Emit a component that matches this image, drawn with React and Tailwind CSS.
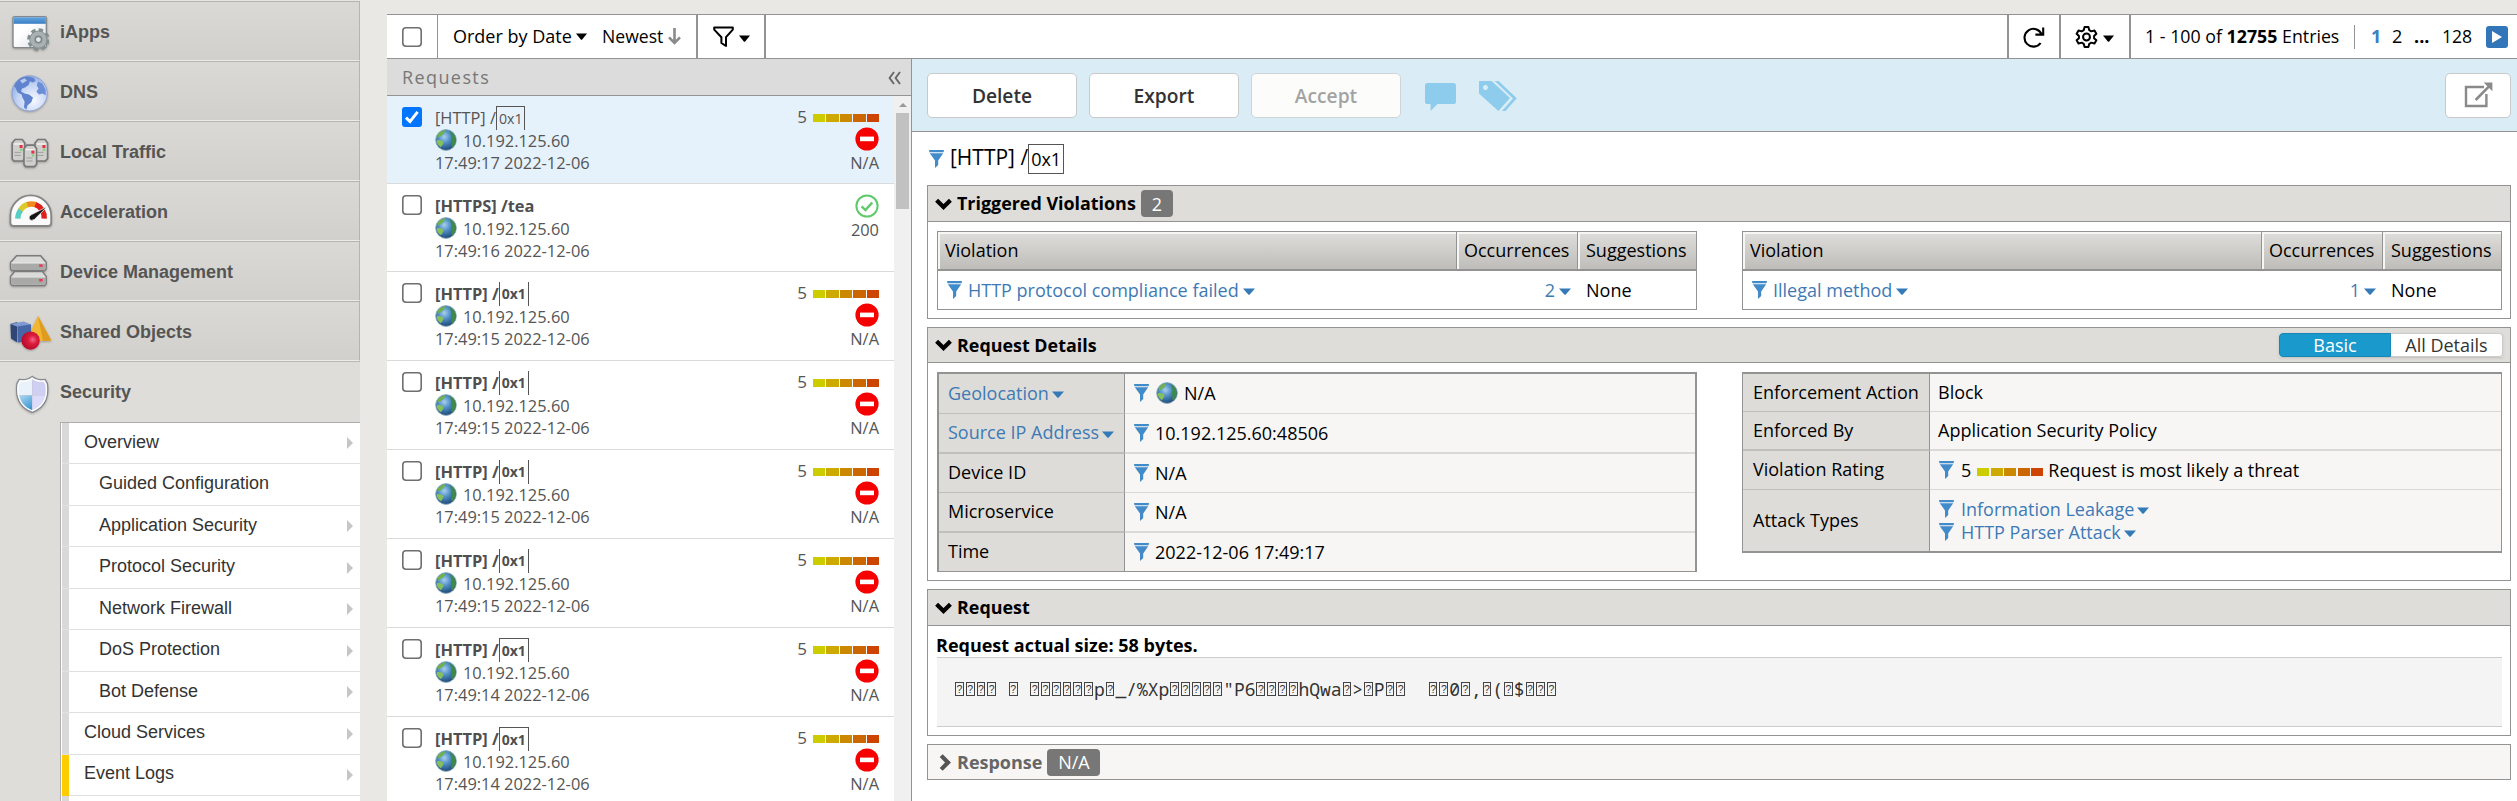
import React from "react";

const Caret = ({ className = "text-black", w = 11, h = 7 }) => (
  <svg width={w} height={h} viewBox="0 0 11 7" preserveAspectRatio="none" className={"shrink-0 " + className}>
    <path d="M0 0.4H11L6.2 6.4Q5.5 7 4.8 6.4Z" fill="currentColor" />
  </svg>
);

const SmallFunnel = ({ className = "" }) => (
  <svg width="15" height="18" viewBox="0 0 15 18" className={"shrink-0 text-[#428bca] " + className}>
    <path d="M0 0H15L14.6 2.2H0.4Z" fill="currentColor" />
    <path d="M0.8 3.3H14.2L9.2 10.4V15L6 18V10.4Z" fill="currentColor" />
  </svg>
);

const Globe = ({ className = "" }) => (
  <svg width="22" height="22" viewBox="0 0 22 22" className={"shrink-0 " + className}>
    <defs>
      <radialGradient id="earth" cx="0.42" cy="0.35" r="0.65">
        <stop offset="0" stopColor="#a9cfee" />
        <stop offset="0.45" stopColor="#4f8fc6" />
        <stop offset="1" stopColor="#1f4a78" />
      </radialGradient>
    </defs>
    <circle cx="11" cy="11" r="10.4" fill="url(#earth)" stroke="#8fb0bd" strokeWidth="0.8" />
    <path d="M3 5.2C5 2.6 8 1.3 10.4 1.5 10.2 3.4 8.6 4 8.2 5.6 6.6 6 5.6 7.6 4.4 8.4 3.2 8.6 2 7.4 3 5.2Z" fill="#6fb050" />
    <path d="M1.6 11.4C3.8 10.4 7 11.2 8.6 13 8.6 15 7 16.4 6 18.2 3.6 16.8 1.6 14.2 1.6 11.4Z" fill="#86bf5c" />
    <path d="M15.4 2.4C18.6 4 20.8 7.4 20.8 11 20.6 14.6 19 17 16.8 18.6 15.6 17 17 14.6 16.2 12.6 15.2 10.6 16.8 9.4 16.6 7.4 16 5.6 14.8 4.6 15.4 2.4Z" fill="#3f8a4a" />
  </svg>
);

const RATING = ["bg-[#cccc00]", "bg-[#ccaa00]", "bg-[#cc8800]", "bg-[#cc6600]", "bg-[#cc4400]"];
const Bars = ({ className = "" }) => (
  <div className={"flex h-2 w-[66px] gap-[1.4px] " + className}>
    {RATING.map((c) => <div key={c} className={"flex-1 " + c} />)}
  </div>
);

const Check = ({ checked }) =>
  checked ? (
    <div className="flex h-5 w-5 items-center justify-center rounded-[3px] bg-[#0075ff]">
      <svg width="16" height="16" viewBox="0 0 16 16"><path d="M2 8.6L6 12.6L13.6 2.8" fill="none" stroke="#fff" strokeWidth="3" /></svg>
    </div>
  ) : (
    <svg width="20" height="20" viewBox="0 0 20 20"><rect x="0.8" y="0.8" width="18.4" height="18.4" rx="3.2" fill="#fff" stroke="#6f6f6f" strokeWidth="1.6" /></svg>
  );

/* ---------- sidebar ---------- */
const ShieldPath = "M18 2C20.5 4.2 25 5.8 31 5L33.2 9C35 22 31 33 18 38 5 33 1 22 2.8 9L5 5C11 5.8 15.5 4.2 18 2Z";
const ICONS = {
  iApps: (
    <svg width="40" height="40" viewBox="0 0 40 40">
      <defs>
        <linearGradient id="wbar" x2="0" y2="1"><stop stopColor="#62a5e0" /><stop offset="1" stopColor="#3a7fc4" /></linearGradient>
        <linearGradient id="wbody" x2="1" y2="1"><stop offset="0.4" stopColor="#fff" /><stop offset="1" stopColor="#d9dbe4" /></linearGradient>
      </defs>
      <rect x="4" y="3.6" width="33.4" height="31" rx="1.5" fill="url(#wbody)" stroke="#85888b" strokeWidth="1.4" />
      <rect x="4.6" y="4.2" width="32.2" height="6.6" fill="url(#wbar)" />
      <circle cx="29.4" cy="26.6" r="9.6" fill="none" stroke="#84908f" strokeWidth="3.4" strokeDasharray="4.4 3.14" />
      <circle cx="29.4" cy="26.6" r="8.6" fill="#a9b2b1" stroke="#838e8d" strokeWidth="1" />
      <circle cx="29.4" cy="26.6" r="3.2" fill="#e4e6e6" stroke="#7c8887" strokeWidth="1.6" />
    </svg>
  ),
  DNS: (
    <svg width="40" height="40" viewBox="0 0 40 40">
      <defs>
        <radialGradient id="dnsg" cx="0.6" cy="0.7" r="0.75"><stop stopColor="#f6f9ff" /><stop offset="0.6" stopColor="#c3d3f4" /><stop offset="1" stopColor="#86a3e0" /></radialGradient>
      </defs>
      <circle cx="20.6" cy="20.4" r="17.6" fill="url(#dnsg)" stroke="#8ca3d6" strokeWidth="1" />
      <path d="M5 13C8 6.5 13 3.4 19 3.4L25 5 26.5 8 23.5 9.4 21 8.2 19.5 12 16 14.6 13 15.4 12 18.6 15.5 20.6 20 21.6 24 24.6 22.4 29 18.4 32.6 17.4 36.4 15 34.4 15.6 28.6 13.4 24.4 12.6 21.4 8.6 19.4 6.6 15Z" fill="#5f83cf" />
      <path d="M29 8.6L33.4 10.6 36.6 16.4 36.8 22.4 33.8 20.4 30 21.4 27.4 18.4 29.6 15.6 27.8 12.4Z" fill="#6c8ed6" />
      <path d="M11 7.4L15.5 5.2 18 7.4 13.4 10.6Z" fill="#dfe8fb" opacity="0.7" />
    </svg>
  ),
  "Local Traffic": (
    <svg width="40" height="40" viewBox="0 0 40 40">
      {[[3.2, 6], [26, 6], [15, 11.6]].map(([x, y], i) => (
        <g key={i} transform={"translate(" + x + " " + y + ")"}>
          <path d="M0 4L3 0.5H10L12.6 4V19.6L10.4 22H1.6L0 20Z" fill="#cfcfcd" stroke="#777" strokeWidth="1.6" />
          <path d="M2 5H10.6" stroke="#f2f2f0" strokeWidth="1.4" />
          <path d="M2.4 13.4H8.6M2.4 16.4H8.6" stroke="#999" strokeWidth="0.9" />
          <rect x="7.4" y="6" width="3" height="3" fill="#e8304a" />
          <rect x="7.8" y="9.8" width="2.4" height="2" fill="#7bd36a" />
        </g>
      ))}
    </svg>
  ),
  Acceleration: (
    <svg width="44" height="40" viewBox="0 0 44 40">
      <path d="M1.4 30V22.6A20.4 20.2 0 0 1 42.2 22.6V30Q42.2 33 39 33H4.6Q1.4 33 1.4 30Z" fill="#fafafa" stroke="#858585" strokeWidth="1.8" />
      <path d="M8.8 25.6A13 14 0 0 1 12 16.6" fill="none" stroke="#59cfc4" strokeWidth="5.4" />
      <path d="M11.4 17A14 14 0 0 1 19 11.4" fill="none" stroke="#dcc92a" strokeWidth="5.4" />
      <path d="M18.4 11.6A14 14 0 0 1 27 11.8" fill="none" stroke="#f08a1c" strokeWidth="5.4" />
      <path d="M26.4 11.5A14 14 0 0 1 35.2 25.6" fill="none" stroke="#e0201c" strokeWidth="5.4" />
      <path d="M38.4 13.6L25.4 26.4Q22 28.6 20.2 26Q19.4 23 22.6 21.6Z" fill="#151515" stroke="#fff" strokeWidth="0.7" />
    </svg>
  ),
  "Device Management": (
    <svg width="40" height="40" viewBox="0 0 40 40">
      {[2.4, 19].map((y, i) => (
        <g key={i} transform={"translate(0.6 " + (y - 1) + ")"}>
          <path d={i ? "M1 5.4L5 0.6H32.8L36.6 5.4V12.6L35 14.6H2.6L1 12.6Z" : "M1 8L7 1.4H31L36.6 8V14.6L35 16.4H2.6L1 14.6Z"} fill="#dadad8" stroke="#7b7b7b" strokeWidth="1.5" />
          <path d={i ? "M1.8 5.8H35.8V12.4L34.6 13.8H3L1.8 12.4Z" : "M1.8 8.2H35.8V14.2L34.6 15.6H3L1.8 14.2Z"} fill="#a9a9a8" />
          <path d={i ? "M2 6H35.6" : "M2 8.4H35.6"} stroke="#eee" strokeWidth="1.2" />
          <rect x="29.6" y={i ? 8 : 10} width="3.4" height="2.4" fill="#ee3350" />
        </g>
      ))}
    </svg>
  ),
  "Shared Objects": (
    <svg width="44" height="40" viewBox="0 0 44 40">
      <defs><radialGradient id="ball" cx="0.62" cy="0.45" r="0.6"><stop stopColor="#ef6a86" /><stop offset="0.4" stopColor="#dc1c3c" /><stop offset="1" stopColor="#b80a2a" /></radialGradient></defs>
      <path d="M29 3L42.4 27.4L24 28.4L20 22Z" fill="#f2b632" />
      <path d="M29 3L42.4 27.4L34 28Z" fill="#dd9c20" />
      <path d="M1.4 11L8.2 9V29.4L2 25.6Z" fill="#2f4676" />
      <path d="M1.4 11L14.6 8.4L22 11.4L9 14Z" fill="#7f9ad0" />
      <path d="M8.6 13.4L22 11.2V28L9 29.6Z" fill="#4666a8" />
      <circle cx="21.6" cy="27.6" r="9.2" fill="url(#ball)" />
    </svg>
  ),
  Security: (
    <svg width="40" height="40" viewBox="-2.6 -1.4 36 40">
      <defs><clipPath id="shc"><path d={ShieldPath} /></clipPath>
        <linearGradient id="shb" x1="0" y1="0" x2="0.6" y2="1"><stop stopColor="#bfe3f6" /><stop offset="1" stopColor="#2f8fd0" /></linearGradient></defs>
      <g transform="translate(0.6 0)">
        <g clipPath="url(#shc)">
          <rect width="18" height="21" fill="#e9f2fb" />
          <rect x="18" width="18" height="21" fill="#cfcff2" />
          <rect y="21" width="18" height="19" fill="url(#shb)" />
          <rect x="18" y="21" width="18" height="19" fill="#dcdcfa" />
        </g>
        <path d={ShieldPath} fill="none" stroke="#84888f" strokeWidth="1.3" />
        <path d={ShieldPath} fill="none" stroke="#fff" strokeWidth="1.5" transform="translate(1.6 1.9) scale(0.91)" />
      </g>
    </svg>
  ),
};
const NAV = ["iApps", "DNS", "Local Traffic", "Acceleration", "Device Management", "Shared Objects"];
const SUB = [["Overview", 0, 1], ["Guided Configuration", 1, 0], ["Application Security", 1, 1], ["Protocol Security", 1, 1], ["Network Firewall", 1, 1], ["DoS Protection", 1, 1], ["Bot Defense", 1, 1], ["Cloud Services", 0, 1], ["Event Logs", 0, 1]];

const NavItem = ({ name }) => (
  <>
    <div className="flex w-[60px] shrink-0 items-center pl-[9px] drop-shadow-[0_1px_1px_rgba(0,0,0,0.25)]">{ICONS[name]}</div>
    <span className="text-[18px] font-bold text-[#555]">{name}</span>
  </>
);

const Sidebar = () => (
  <div className="h-[801px] w-[360px] shrink-0 overflow-hidden bg-[#dedddA] font-['Liberation_Sans',Arial,sans-serif]">
    <div className="h-px bg-[#e6e5e1]" />
    {NAV.map((n) => (
      <div key={n} className="flex h-[60px] items-center border-t border-r border-b border-t-[#b5b4b1] border-r-[#b5b4b1] border-b-[#ecebe8] bg-linear-to-b from-[#dad9d5] to-[#d1d0cc] pt-[3px]">
        <NavItem name={n} />
      </div>
    ))}
    <div className="flex h-[61px] items-center border-t border-t-[#b9b8b5] pt-px">
      <NavItem name="Security" />
    </div>
    <div className="ml-[60px] h-[400px] border-t border-l border-[#aeadab] bg-white">
      {SUB.map(([t, lv, arrow]) => (
        <div key={t} className="flex h-[41.45px] pl-px">
          <div className={t === "Event Logs" ? "w-[7px] bg-[#ffcc00]" : "w-[7px] border-b border-[#e2e2e2] bg-[#d9d9d9]"} />
          <div className={"flex flex-1 items-center justify-between border-b border-[#dfdfdf] pr-[7px] pb-[1.5px] text-[18px] text-[#333] " + (lv ? "pl-[30px]" : "pl-[15px]")}>
            <span>{t}</span>
            {arrow ? <svg width="6" height="12" viewBox="0 0 6 12" className="mt-[2px]"><path d="M0 0L6 6L0 12Z" fill="#c6c6c6" /></svg> : null}
          </div>
        </div>
      ))}
      <div className="flex h-8 pl-px"><div className="w-[7px] bg-[#d9d9d9]" /></div>
    </div>
  </div>
);

/* ---------- toolbar ---------- */
const Toolbar = () => (
  <div className="flex h-[45px] items-stretch border-t border-b border-[#939393] bg-white text-[18px] leading-6 text-black">
    <div className="flex w-[51px] items-center border-r border-[#939393] pl-[15px]"><Check /></div>
    <div className="flex w-[258px] items-center pb-0.5 pl-[15px]">
      <span className="w-[119px] whitespace-nowrap">Order by Date</span>
      <Caret className="mt-0.5 ml-[4px] text-black" />
      <span className="ml-[15px] text-[17.6px]">Newest</span>
      <svg width="13" height="17" viewBox="0 0 13 17" className="mt-0.5 ml-[5px]"><path d="M6.5 0V15M1 9.4L6.5 15L12 9.4" fill="none" stroke="#8a8a8a" strokeWidth="2.6" /></svg>
    </div>
    <div className="flex w-[70px] items-center border-r-2 border-l-2 border-[#939393] pl-[15px]">
      <svg width="21" height="22" viewBox="0 0 21 22"><path d="M1.2 1.4H19.8V3.6L13 11.2V20L8.4 17V11.2L1.2 3.6Z" fill="none" stroke="#000" strokeWidth="2" strokeLinejoin="round" /></svg>
      <Caret className="mt-1 ml-[5px] text-black" />
    </div>
    <div className="flex-1" />
    <div className="flex w-[52px] items-center justify-center border-l-2 border-[#939393]">
      <svg width="22" height="22" viewBox="0 0 22 22"><path d="M17.6 17A8.9 8.9 0 1 1 18.6 8.2M20.2 1.6V8.6H12.4" fill="none" stroke="#000" strokeWidth="2.1" /></svg>
    </div>
    <div className="flex w-[70px] items-center border-l-2 border-[#939393] pl-[14px]">
      <svg width="23" height="24" viewBox="0 0 24 24" fill="none" stroke="#000" strokeWidth="2.1" strokeLinejoin="round">
        <path d="M10 1.6H14L14.9 4.9L17 6.1L20.3 5.2L22.3 8.7L19.9 11V13.2L22.3 15.4L20.3 18.8L17 17.9L14.9 19.1L14 22.4H10L9.1 19.1L7 17.9L3.7 18.8L1.7 15.4L4.1 13.2V11L1.7 8.7L3.7 5.2L7 6.1L9.1 4.9Z" />
        <circle cx="12" cy="12" r="3.6" />
      </svg>
      <Caret className="mt-1 ml-[5px] text-black" />
    </div>
    <div className="flex w-[388px] items-center border-l-2 border-[#939393] pl-[14px]">
      <span className="w-[196px] pb-0.5 text-[17.8px] whitespace-nowrap">1 - 100 of <b>12755</b> Entries</span>
      <div className="ml-[13px] h-6 w-px bg-[#939393]" />
      <span className="ml-4 w-[21px] pb-0.5 font-bold text-[#3d7fc0]">1</span>
      <span className="w-[22px] pb-0.5">2</span>
      <span className="w-[28px] pb-0.5 font-bold">...</span>
      <span className="w-[43px] pb-0.5 text-[17.6px]">128</span>
      <div className="ml-px flex h-[22px] w-[22px] items-center justify-center rounded-[3px] bg-[#3276b9]">
        <svg width="10" height="12" viewBox="0 0 10 12"><path d="M0 0L10 6L0 12Z" fill="#fff" /></svg>
      </div>
    </div>
  </div>
);

/* ---------- request list ---------- */
const ROWS = [
  { t: "17:49:17", sel: 1, h: "h-[88px]", box: "border-t" },
  { t: "17:49:16", ok: 1, h: "h-[88px]" },
  { t: "17:49:15", h: "h-[89px]", box: "" },
  { t: "17:49:15", h: "h-[89px]", box: "" },
  { t: "17:49:15", h: "h-[89px]", box: "" },
  { t: "17:49:15", h: "h-[89px]", box: "" },
  { t: "17:49:14", h: "h-[89px]", box: "border-t" },
  { t: "17:49:14", h: "h-[89px]", box: "border-t" },
];

const Row = ({ r }) => (
  <div className={"flex shrink-0 border-b border-[#dadada] pr-[15px] pl-[15px] " + r.h + (r.sel ? " bg-[#e5f1fb]" : " bg-white")}>
    <div className="w-[33px] shrink-0 pt-[11px]"><Check checked={r.sel} /></div>
    <div className="flex-1 pt-[10px] text-[16.4px] whitespace-nowrap text-[#555]">
      <div className={"flex h-6 items-center leading-6 " + (r.sel ? "" : "font-bold text-[#4f4f4f]")}>
        {r.ok ? "[HTTPS] /tea" : (
          <>
            <span>[HTTP] /</span>
            <span className={"flex h-6 items-center border-r border-l border-[#555] pl-[2px] " + (r.sel ? "w-[29px] text-[14.2px] " : "w-[30px] text-[14px] ") + r.box}>0x1</span>
          </>
        )}
      </div>
      <div className="flex h-6 items-center gap-[6px] leading-6"><Globe className="-mt-1" /><span className="-mt-0.5">10.192.125.60</span></div>
      <div className="-mt-px h-5 leading-5">{r.t} 2022-12-06</div>
    </div>
    <div className="flex flex-col items-end text-[16.4px] text-[#555]">
      {r.ok ? (
        <>
          <svg width="24" height="24" viewBox="0 0 24 24" className="mt-[10px]"><circle cx="12" cy="12" r="10.6" fill="none" stroke="#5fc96b" strokeWidth="2" /><path d="M6.6 12.4L10.4 16L17.2 8.6" fill="none" stroke="#5fc96b" strokeWidth="2.4" /></svg>
          <span className="leading-[23px]">200</span>
        </>
      ) : (
        <>
          <div className="flex h-6 items-center pt-[17px] leading-6"><span className="mr-[6px] text-[17px]">5</span><Bars className="mt-0.5" /></div>
          <svg width="24" height="24" viewBox="0 0 24 24" className="mt-[7px]"><circle cx="12" cy="12" r="11.6" fill="#f70000" /><rect x="5" y="9.6" width="14" height="4.6" fill="#fff" /></svg>
          <span className="leading-[23px]">N/A</span>
        </>
      )}
    </div>
  </div>
);

const ListPanel = () => (
  <div className="flex w-[525px] shrink-0 flex-col border-r border-[#939393]">
    <div className="flex h-[37px] shrink-0 items-center justify-between border-b border-[#939393] bg-[#dcdcdc] pr-[10px] pl-[15px] text-[18px] tracking-[1.4px] text-[#777]">
      <span>Requests</span>
      <svg width="13" height="14" viewBox="0 0 13 14" className="mt-0.5"><path d="M6 1L1.6 7L6 13M12 1L7.6 7L12 13" fill="none" stroke="#666" strokeWidth="1.9" /></svg>
    </div>
    <div className="flex min-h-0 flex-1 overflow-hidden">
      <div className="flex w-[507px] flex-col">{ROWS.map((r, i) => <Row key={i} r={r} />)}</div>
      <div className="flex flex-1 flex-col items-center bg-[#f0f0f0] pt-[7px]">
        <svg width="8" height="4" viewBox="0 0 8 4"><path d="M0 4L4 0L8 4Z" fill="#999" /></svg>
        <div className="mt-[6px] h-24 w-[13px] bg-[#c1c1c1]" />
      </div>
    </div>
  </div>
);

/* ---------- detail pane ---------- */
const Btn = ({ children, dim }) => (
  <div className={"flex h-[45px] w-[150px] items-center justify-center rounded-[5px] border pt-px text-[19.2px] font-semibold " + (dim ? "border-[#d0d4d6] bg-[#fcfcfb] text-[#a3a3a3]" : "border-[#c9c9c9] bg-white text-[#333]")}>{children}</div>
);

const Down = () => (
  <svg width="17" height="12" viewBox="0 0 17 12" className="shrink-0"><path d="M1.6 2.2L8.5 9L15.4 2.2" fill="none" stroke="#000" strokeWidth="4.2" /></svg>
);

const Head = ({ title, h, children }) => (
  <div className={"flex shrink-0 items-center border-b border-[#939393] bg-[#dedddA] pr-[7px] pl-[7px] text-[17.9px] font-bold text-black " + h}>
    <Down /><span className="ml-[5px] pb-px whitespace-nowrap">{title}</span>{children}
  </div>
);

const Link = ({ children, gap = "gap-[3px]" }) => (
  <span className={"flex items-center whitespace-nowrap text-[#3d7ab5] " + gap}>{children}<Caret className="mt-1 text-[#337ab7]" w={12} /></span>
);

const TH = "flex items-center border-t-2 border-l-2 border-t-[#f6f6f5] border-l-[#f6f6f5] bg-linear-to-b from-[#dedcd8] to-[#bfbdb9] pb-[3px] whitespace-nowrap ";
const VTable = ({ name, n }) => (
  <div className="flex h-[79px] w-[760px] flex-col border border-[#939393]">
    <div className="flex h-[39px] border-b-2 border-[#939393]">
      <div className={TH + "flex-1 pl-[5px]"}>Violation</div>
      <div className={TH + "w-[121px] pl-[5px] shadow-[-1px_0_0_#939393]"}>Occurrences</div>
      <div className={TH + "w-[118px] pl-[6px] shadow-[-1px_0_0_#939393]"}>Suggestions</div>
    </div>
    <div className="flex flex-1 items-center pb-px pl-[9px]">
      <SmallFunnel className="mr-[6px]" />
      <Link gap="gap-[4px]">{name}</Link>
      <span className="flex-1" />
      <Link gap="gap-[4px]">{n}</Link>
      <span className="ml-[15px] w-[110px]">None</span>
    </div>
  </div>
);

const DRow = ({ h, label, lw, children, thick, last, pl = "pl-[9px]" }) => {
  const b = last ? "" : thick ? "border-b-2 " : "border-b ";
  return (
    <div className={"flex " + h}>
      <div className={b + "flex shrink-0 items-center border-r border-b-[#c0bfbc] border-r-[#939393] bg-[#dddcd8] pb-[2px] whitespace-nowrap " + lw}>{label}</div>
      <div className={b + "flex flex-1 items-center border-[#dad9d8] bg-[#f7f6f5] pb-px whitespace-nowrap " + pl}>{children}</div>
    </div>
  );
};

const RAW = "???? ? ??????p?_/%Xp?????\"P6????hQwa?>?P??  ??0?,?(?$???";

const Detail = () => (
  <div className="flex min-w-0 flex-1 flex-col bg-white text-[18px] leading-6 text-black">
    <div className="flex h-[73px] shrink-0 items-center gap-3 border-b border-[#939393] bg-[#daecf6] pr-[6px] pl-[15px]">
      <Btn>Delete</Btn>
      <Btn>Export</Btn>
      <Btn dim>Accept</Btn>
      <svg width="31" height="28" viewBox="0 0 31 28" className="mt-1 ml-3"><path d="M2.6 0H28.4Q31 0 31 2.6V18.4Q31 21 28.4 21H12.4L5.6 28V21H2.6Q0 21 0 18.4V2.6Q0 0 2.6 0Z" fill="#8dccec" /></svg>
      <svg width="38" height="30" viewBox="0 0 38 30" className="mt-0.5 ml-[11px]">
        <path fillRule="evenodd" d="M0 0H12.6L31 17L19.4 30L0 12.4ZM6.4 4A2.5 2.5 0 1 0 6.5 4Z" fill="#8dccec" />
        <path d="M15.8 0H19.6L37.8 17.2L26.4 30H23L34 17.4Z" fill="#8dccec" />
      </svg>
      <span className="flex-1" />
      <div className="flex h-[45px] w-[66px] items-center justify-center rounded-[5px] border border-[#c9c9c9] bg-white">
        <svg width="29" height="26" viewBox="0 0 29 26"><path d="M20 5H2V24H22.4V12" fill="none" stroke="#8a8a8a" strokeWidth="2.4" /><path d="M11.6 18L26 3.4" stroke="#8a8a8a" strokeWidth="2.6" /><path d="M19.6 0.6H28.4V9.2Z" fill="#8a8a8a" /></svg>
      </div>
    </div>

    <div className="flex h-[53px] shrink-0 items-center pl-[17px] text-[21px]">
      <SmallFunnel />
      <span className="ml-[6px] pb-[3px] whitespace-nowrap">[HTTP] /</span>
      <span className="flex h-[30px] w-9 items-center justify-center border border-[#555] text-[18px]">0x1</span>
    </div>

    <div className="flex flex-col gap-2 pr-[6px] pl-[15px]">
      <section className="flex h-[134px] flex-col border border-[#939393]">
        <Head title="Triggered Violations" h="h-9">
          <span className="ml-[5px] flex h-[27px] w-8 items-center justify-center rounded-[4px] bg-[#777] font-normal text-white">2</span>
        </Head>
        <div className="flex justify-between pt-[9px] pr-[8px] pl-[9px]">
          <VTable name="HTTP protocol compliance failed" n="2" />
          <VTable name="Illegal method" n="1" />
        </div>
      </section>

      <section className="flex h-[254px] flex-col border border-[#939393]">
        <Head title="Request Details" h="h-[35px]">
          <span className="flex-1" />
          <div className="flex h-6 text-[18px] font-normal shadow-sm">
            <div className="flex w-28 items-center justify-center rounded-l-[4px] border border-[#1787b8] bg-[#1a99cd] text-white">Basic</div>
            <div className="flex w-28 items-center justify-center rounded-r-[4px] border border-l-0 border-[#ccc] bg-white text-[#333]">All Details</div>
          </div>
        </Head>
        <div className="flex items-start justify-between pt-[9px] pr-[8px] pl-[9px]">
          <div className="w-[760px] border-2 border-b border-[#939393]">
            <DRow h="h-10" lw="w-[186px] pl-[9px]" label={<Link gap="gap-[3px]">Geolocation</Link>}><SmallFunnel /><Globe className="mr-[6px] ml-[7px]" />N/A</DRow>
            <DRow h="h-10" lw="w-[186px] pl-[9px]" thick label={<Link gap="gap-[3px]">Source IP Address</Link>}><SmallFunnel className="mr-[6px]" />10.192.125.60:48506</DRow>
            <DRow h="h-[39px]" lw="w-[186px] pl-[9px]" label="Device ID"><SmallFunnel className="mr-[6px]" />N/A</DRow>
            <DRow h="h-10" lw="w-[186px] pl-[9px]" thick label="Microservice"><SmallFunnel className="mr-[6px]" />N/A</DRow>
            <DRow h="h-[38px]" lw="w-[186px] pl-[9px]" last label="Time"><SmallFunnel className="mr-[6px]" />2022-12-06 17:49:17</DRow>
          </div>
          <div className="w-[760px] border border-t-2 border-b-2 border-[#939393]">
            <DRow h="h-[38px]" lw="w-[187px] pl-[10px]" pl="pl-[8px]" label="Enforcement Action">Block</DRow>
            <DRow h="h-[39px]" lw="w-[187px] pl-[10px]" pl="pl-[8px]" thick label="Enforced By">Application Security Policy</DRow>
            <DRow h="h-[39px]" lw="w-[187px] pl-[10px]" pl="pl-[9px]" label="Violation Rating"><SmallFunnel className="mr-[7px]" />5<Bars className="mt-1 mr-[5px] ml-[6px]" />Request is most likely a threat</DRow>
            <DRow h="h-[61px]" lw="w-[187px] pl-[10px]" pl="pl-[9px]" last label="Attack Types">
              <div className="flex flex-col">
                <div className="flex h-[23px] items-center"><SmallFunnel className="mr-[7px]" /><Link gap="gap-[3px]">Information Leakage</Link></div>
                <div className="flex h-[23px] items-center"><SmallFunnel className="mr-[7px]" /><Link gap="gap-[3px]">HTTP Parser Attack</Link></div>
              </div>
            </DRow>
          </div>
        </div>
      </section>

      <section className="flex h-[147px] flex-col border border-[#939393]">
        <Head title="Request" h="h-9" />
        <div className="flex flex-col pr-[8px] pl-[9px]">
          <div className="-ml-px h-[31px] pt-[7px] font-bold">Request actual size: 58 bytes.</div>
          <div className="flex h-[70px] items-center border-t border-b border-[#ccc] bg-[#f4f4f4] pb-[6px] pl-[17px] font-['Noto_Sans_Mono','DejaVu_Sans_Mono',monospace] text-[18px] text-[#333]">
            {RAW.split("").map((c, i) =>
              c === "?" ? (
                <span key={i} className="mr-px ml-px flex h-[14px] w-[8.77px] items-center justify-center border border-[#444] font-['Liberation_Sans'] text-[10.5px] leading-none">?</span>
              ) : (
                <span key={i} className="w-[10.77px] whitespace-pre">{c}</span>
              )
            )}
          </div>
        </div>
      </section>

      <section className="flex h-9 items-center border border-[#939393] bg-[#f7f6f5] pl-[11px] font-bold text-[#666]">
        <svg width="12" height="17" viewBox="0 0 12 17"><path d="M2.2 1.6L9 8.5L2.2 15.4" fill="none" stroke="#555" strokeWidth="4.2" /></svg>
        <span className="ml-[6px] pb-px">Response</span>
        <span className="ml-[5px] flex h-[27px] w-[53px] items-center justify-center rounded-[4px] bg-[#777] font-normal text-white">N/A</span>
      </section>
    </div>
  </div>
);

export default function App() {
  return (
    <div className="flex h-[801px] w-[2517px] overflow-hidden bg-[#e9e8e4] font-['Open_Sans','Noto_Sans',sans-serif]">
      <Sidebar />
      <div className="flex min-w-0 flex-1 flex-col pt-[14px] pl-[27px]">
        <Toolbar />
        <div className="flex min-h-0 flex-1">
          <ListPanel />
          <Detail />
        </div>
      </div>
    </div>
  );
}
